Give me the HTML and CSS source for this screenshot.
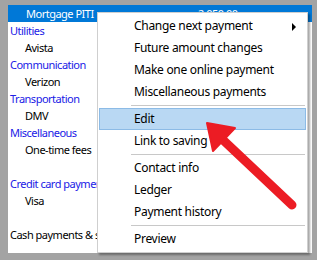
FILE: index.html
```html
<!DOCTYPE html>
<html>
<head>
<meta charset="utf-8">
<link rel="stylesheet" href="styles.css">
</head>
<body>
<div class="frame">
  <div class="panel">
    <div class="row selected"><span class="name">Mortgage PITI</span><span class="amount">2,050.00</span></div>
    <div class="row cat">Utilities</div>
    <div class="row sub">Avista</div>
    <div class="row cat">Communication</div>
    <div class="row sub">Verizon</div>
    <div class="row cat">Transportation</div>
    <div class="row sub">DMV</div>
    <div class="row cat">Miscellaneous</div>
    <div class="row sub">One-time fees</div>
    <div class="row"></div>
    <div class="row cat">Credit card paymen</div>
    <div class="row sub">Visa</div>
    <div class="row"></div>
    <div class="row">Cash payments &amp; s</div>
    <div class="dashes"><span></span><span></span></div>
  </div>

  <div class="menu">
    <div class="item">Change next payment<span class="sub-arrow"></span></div>
    <div class="item">Future amount changes</div>
    <div class="item">Make one online payment</div>
    <div class="item">Miscellaneous payments</div>
    <div class="sep"></div>
    <div class="item hot">Edit</div>
    <div class="item">Link to saving</div>
    <div class="sep"></div>
    <div class="item">Contact info</div>
    <div class="item">Ledger</div>
    <div class="item">Payment history</div>
    <div class="sep"></div>
    <div class="item">Preview</div>
  </div>

  <svg class="pointer" width="317" height="260" viewBox="0 0 317 260">
    <line x1="292" y1="205" x2="222" y2="139" stroke="#ec1c24" stroke-width="9" stroke-linecap="round"/>
    <polygon points="207,123 235,128 213,151" fill="#ec1c24" stroke="#ec1c24" stroke-width="2" stroke-linejoin="round"/>
  </svg>
</div>
</body>
</html>
```
FILE: styles.css
```css
html, body {
  margin: 0;
  padding: 0;
}
body {
  width: 317px;
  height: 260px;
  background: #a3a3a3;
  font-family: "Segoe UI", "Noto Sans", "Open Sans", sans-serif;
  font-size: 12px;
  letter-spacing: -0.3px;
  overflow: hidden;
}
.frame {
  position: relative;
  width: 317px;
  height: 260px;
  padding: 5px 5px 0 8px;
  box-sizing: border-box;
}
.panel {
  background: #fff;
  height: 248px;
  position: relative;
  overflow: hidden;
}
.row {
  height: 17px;
  line-height: 17px;
  padding-left: 2px;
  color: #000;
  white-space: nowrap;
  font-size: 11px;
  letter-spacing: -0.5px;
}
.row.cat {
  color: #2020e6;
}
.row.sub {
  padding-left: 17px;
}
.row.selected {
  background: #0078d7;
  color: #fff;
  display: flex;
  padding-left: 0;
}
.row.selected .name {
  padding-left: 18px;
  width: 172px;
}
.dashes {
  display: flex;
  gap: 14px;
  padding-left: 158px;
}
.dashes span {
  display: block;
  width: 62px;
  border-top: 1px dashed #333;
}
.menu {
  position: absolute;
  left: 97px;
  top: 12px;
  width: 211px;
  background: #fff;
  border: 1px solid #cfcfcf;
  box-shadow: 2px 2px 2px rgba(0,0,0,0.35);
  padding: 2px 0;
  box-sizing: border-box;
}
.item {
  position: relative;
  height: 22px;
  line-height: 22px;
  padding-left: 35px;
  color: #000;
  white-space: nowrap;
  margin: 0 1px;
}
.item.hot {
  background: #b9d8f3;
  outline: 1px solid #8cbbe6;
  outline-offset: -1px;
}
.sub-arrow {
  position: absolute;
  right: 10px;
  top: 8px;
  width: 0;
  height: 0;
  border-left: 4px solid #000;
  border-top: 4px solid transparent;
  border-bottom: 4px solid transparent;
}
.sep {
  height: 1px;
  background: #c8c8c8;
  margin: 2px 2px 2px 33px;
}
.pointer {
  position: absolute;
  left: 0;
  top: 0;
}
```
